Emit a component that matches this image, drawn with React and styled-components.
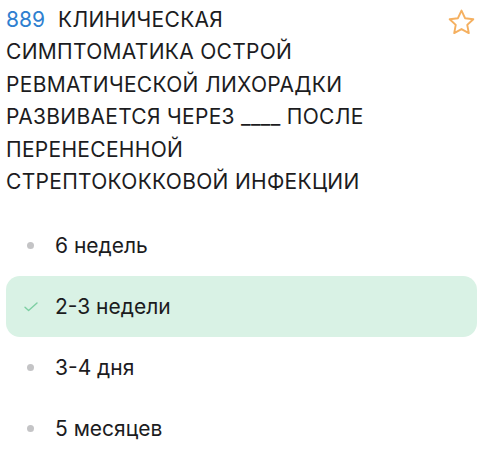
import React from "react";
import styled, { createGlobalStyle } from "styled-components";

const Global = createGlobalStyle`
  html, body { margin: 0; padding: 0; background: #ffffff; }
  body { font-family: Inter, "Noto Sans", sans-serif; color: #1c1c1e; }
`;

const Card = styled.div`
  width: 490px;
  padding: 4px 0 0 6px;
  box-sizing: border-box;
`;

const Header = styled.div`
  display: flex;
  align-items: flex-start;
  justify-content: space-between;
  padding-right: 13px;
`;

const Question = styled.p`
  margin: 0;
  font-size: 21px;
  line-height: 32.4px;
  letter-spacing: 0.3px;
  font-weight: 400;
  text-transform: uppercase;
  max-width: 400px;
`;

const Number = styled.span`
  color: #2f80d0;
  letter-spacing: 0;
  margin-right: 13px;
`;

const Prompt = styled.span`
  color: #1c1c1e;
`;

const StarButton = styled.span`
  display: flex;
  margin-top: 3px;
`;

const Options = styled.div`
  display: flex;
  flex-direction: column;
  margin-top: 17px;
  padding-right: 13px;
`;

const Option = styled.div`
  display: flex;
  align-items: center;
  height: 61px;
  border-radius: 14px;
  background: ${(p) => (p.$correct ? "#d9f2e5" : "transparent")};
  font-size: 21px;
`;

const Marker = styled.span`
  width: 49px;
  display: flex;
  justify-content: center;
  align-items: center;
`;

const Dot = styled.span`
  width: 7px;
  height: 7px;
  border-radius: 50%;
  background: #c4c4c6;
`;

const Star = () => (
  <svg width="31" height="31" viewBox="0 0 24 24" fill="none" stroke="#f5b060" strokeWidth="1.5" strokeLinejoin="round">
    <path d="M12 2.8l2.75 5.85 6.4.8-4.7 4.4 1.2 6.35L12 17.1l-5.65 3.1 1.2-6.35-4.7-4.4 6.4-.8z" />
  </svg>
);

const Check = () => (
  <svg width="14" height="10" viewBox="0 0 14 10" fill="none" stroke="#7dcfa3" strokeWidth="1.4" strokeLinecap="round" strokeLinejoin="round">
    <path d="M1 5.2l3.6 3.4L13 1" />
  </svg>
);

const answers = [
  { text: "6 недель" },
  { text: "2-3 недели", correct: true },
  { text: "3-4 дня" },
  { text: "5 месяцев" },
];

export default function App() {
  return (
    <>
      <Global />
      <Card>
        <Header>
          <Question>
            <Number>889</Number>
            <Prompt>
              Клиническая симптоматика острой ревматической лихорадки развивается через ____ после перенесенной стрептококковой инфекции
            </Prompt>
          </Question>
          <StarButton>
            <Star />
          </StarButton>
        </Header>
        <Options>
          {answers.map((a) => (
            <Option key={a.text} $correct={a.correct}>
              <Marker>{a.correct ? <Check /> : <Dot />}</Marker>
              {a.text}
            </Option>
          ))}
        </Options>
      </Card>
    </>
  );
}
